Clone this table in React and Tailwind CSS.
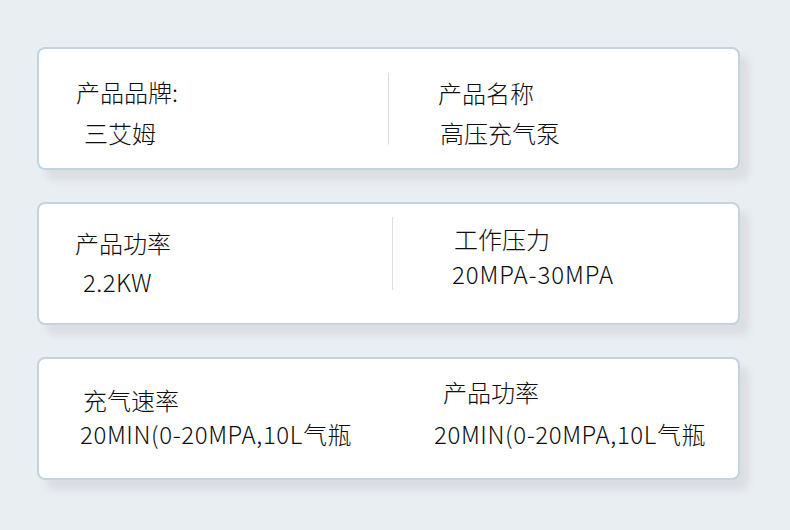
import React from "react";

const font = { fontFamily: '"Noto Sans CJK SC", "Noto Sans", sans-serif' };

function Card({ children, className = "" }) {
  return (
    <div
      className={`mx-[37px] h-[123px] w-[703px] rounded-[8px] border-2 border-[#c2d4e1] bg-white shadow-[9px_10px_7px_rgba(130,110,120,0.12)] flex text-[24px] leading-[24px] ${className}`}
    >
      {children}
    </div>
  );
}

export default function App() {
  return (
    <div className="min-h-[530px] w-[790px] bg-[#e8eef2] pt-[47px] font-light text-[#0d0d0d]" style={font}>
      {/* 品牌 / 名称 */}
      <Card>
        <div className="w-[349px] pl-[37px] pt-[31px]">
          <div>产品品牌:</div>
          <div className="mt-[17px] pl-[8px]">三艾姆</div>
        </div>
        <div className="mt-[24px] h-[72px] w-px bg-[#dddddd]" />
        <div className="pl-[49px] pt-[32px]">
          <div>产品名称</div>
          <div className="mt-[16px] pl-[2px]">高压充气泵</div>
        </div>
      </Card>

      {/* 功率 / 压力 */}
      <Card className="mt-[32px]">
        <div className="w-[353px] pl-[36px] pt-[27px]">
          <div>产品功率</div>
          <div className="mt-[15px] pl-[8px] tracking-[0.4px]">2.2KW</div>
        </div>
        <div className="mt-[13px] h-[73px] w-px bg-[#dddddd]" />
        <div className="pl-[59px] pt-[23px]">
          <div className="pl-[2px]">工作压力</div>
          <div className="mt-[11px] tracking-[0.9px]">20MPA-30MPA</div>
        </div>
      </Card>

      {/* 充气速率 */}
      <Card className="mt-[32px]">
        <div className="w-[357px] pl-[41px] pt-[29px]">
          <div className="pl-[3px]">充气速率</div>
          <div className="mt-[10px] tracking-[0.6px]">20MIN(0-20MPA,10L气瓶</div>
        </div>
        <div className="pl-[38px] pt-[21px]">
          <div className="pl-[9px]">产品功率</div>
          <div className="mt-[18px] tracking-[0.6px]">20MIN(0-20MPA,10L气瓶</div>
        </div>
      </Card>
      <div className="h-[50px]" />
    </div>
  );
}
